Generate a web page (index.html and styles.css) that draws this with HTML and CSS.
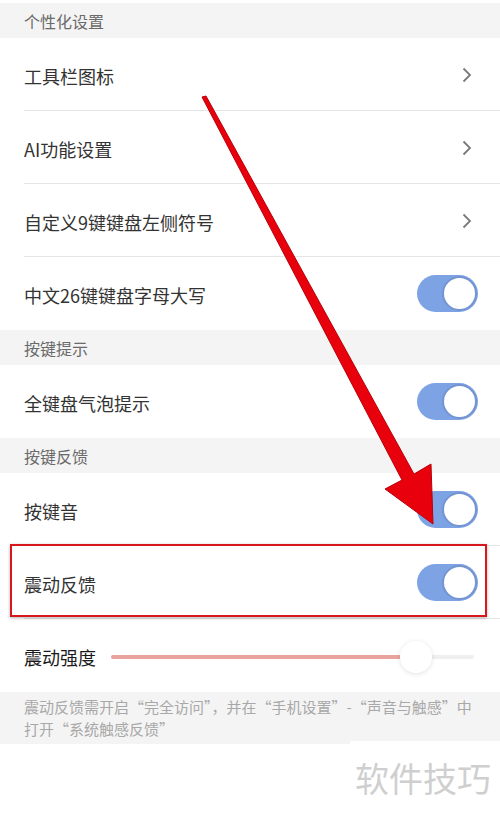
FILE: index.html
```html
<!DOCTYPE html>
<html lang="zh-CN">
<head>
    <meta charset="UTF-8">
    <meta name="viewport" content="width=device-width, initial-scale=1.0">
    <title>键盘设置</title>
    <link rel="stylesheet" href="styles.css">
</head>
<body>
    <div class="page">
        <div class="group-title">个性化设置</div>
        <div class="row">
            <span class="label">工具栏图标</span>
            <svg class="chevron" viewBox="0 0 10 16"><polyline points="1.5,1.5 8,8 1.5,14.5"/></svg>
        </div>
        <div class="row">
            <span class="label">AI功能设置</span>
            <svg class="chevron" viewBox="0 0 10 16"><polyline points="1.5,1.5 8,8 1.5,14.5"/></svg>
        </div>
        <div class="row">
            <span class="label">自定义9键键盘左侧符号</span>
            <svg class="chevron" viewBox="0 0 10 16"><polyline points="1.5,1.5 8,8 1.5,14.5"/></svg>
        </div>
        <div class="row last">
            <span class="label">中文26键键盘字母大写</span>
            <span class="switch"><span class="knob"></span></span>
        </div>

        <div class="group-title">按键提示</div>
        <div class="row last">
            <span class="label">全键盘气泡提示</span>
            <span class="switch"><span class="knob"></span></span>
        </div>

        <div class="group-title">按键反馈</div>
        <div class="row">
            <span class="label">按键音</span>
            <span class="switch"><span class="knob"></span></span>
        </div>
        <div class="row">
            <span class="label">震动反馈</span>
            <span class="switch"><span class="knob"></span></span>
        </div>
        <div class="row last">
            <span class="label strong">震动强度</span>
            <div class="slider">
                <div class="slider-fill" style="width: 80%"></div>
                <div class="slider-thumb" style="left: 84%"></div>
            </div>
        </div>
        <div class="note">震动反馈需开启“完全访问”，并在“手机设置”-“声音与触感”中<br>打开“系统触感反馈”</div>

        <!-- annotation overlays -->
        <div class="highlight-box"></div>
        <svg class="arrow" viewBox="0 0 500 815">
            <polygon points="202,97 206,96 414,474 431,464 433,524 385,489 402,480" fill="#e8000c" stroke="#b80008" stroke-width="1" stroke-linejoin="round"/>
        </svg>
        <div class="watermark">软件技巧</div>
    </div>
</body>
</html>
```

FILE: styles.css
```css
body {
    margin: 0;
    background: #fff;
    font-family: "Noto Sans CJK SC", "Noto Sans", sans-serif;
}
.page {
    position: relative;
    width: 500px;
    height: 815px;
    padding-top: 3px;
    box-sizing: border-box;
    overflow: hidden;
}
.group-title {
    height: 35px;
    background: #f4f4f4;
    color: #6a6a6a;
    font-size: 16px;
    line-height: 37px;
    padding-left: 24px;
}
.row {
    height: 73px;
    box-sizing: border-box;
    display: flex;
    align-items: center;
    justify-content: space-between;
    padding: 0 22px 0 24px;
    position: relative;
}
.row::after {
    content: "";
    position: absolute;
    left: 24px;
    right: 0;
    bottom: 0;
    height: 1px;
    background: #e6e6e6;
}
.row.last::after {
    display: none;
}
.label {
    font-size: 18px;
    color: #333;
    padding-top: 2px;
}
.label.strong {
    color: #1a1a1a;
    flex-shrink: 0;
}
.chevron {
    width: 10px;
    height: 16px;
    margin-right: 6px;
    fill: none;
    stroke: #7a7a7a;
    stroke-width: 1.8;
}
.switch {
    width: 61px;
    height: 37px;
    border-radius: 19px;
    background: #7ea3e5;
    display: flex;
    justify-content: flex-end;
    align-items: center;
    padding: 1px;
    box-sizing: border-box;
}
.knob {
    width: 35px;
    height: 35px;
    border-radius: 50%;
    background: #fff;
    border: 2px solid #7394d2;
    box-sizing: border-box;
}
.slider {
    position: relative;
    flex: 1;
    height: 4px;
    margin-left: 15px;
    margin-right: 4px;
    margin-top: 2px;
    background: #efefef;
    border-radius: 2px;
}
.slider-fill {
    height: 4px;
    background: #e8a39d;
    border-radius: 2px;
}
.slider-thumb {
    position: absolute;
    top: 50%;
    width: 32px;
    height: 32px;
    margin: -16px 0 0 -16px;
    border-radius: 50%;
    background: #fff;
    box-shadow: 0 1px 5px rgba(0,0,0,0.12);
}
.note {
    height: 52px;
    box-sizing: border-box;
    background: #f4f4f4;
    color: #a8a8a8;
    font-size: 15px;
    line-height: 22px;
    padding: 4px 0 0 24px;
}
.highlight-box {
    position: absolute;
    left: 10px;
    top: 544px;
    width: 477px;
    height: 73px;
    box-sizing: border-box;
    border: 2px solid #d8161d;
    box-shadow: 0 1px 3px rgba(0,0,0,0.3);
}
.arrow {
    position: absolute;
    left: 0;
    top: 0;
    width: 500px;
    height: 815px;
}
.watermark {
    position: absolute;
    left: 350px;
    top: 741px;
    right: 0;
    bottom: 0;
    background: #fff;
    color: #cfcfcf;
    font-size: 34px;
    line-height: 1;
    padding: 20px 0 0 5px;
}
```
